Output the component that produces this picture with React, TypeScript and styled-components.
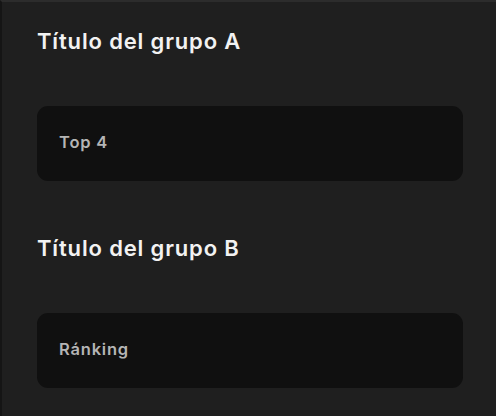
import React from "react";
import styled, { createGlobalStyle } from "styled-components";

const Global = createGlobalStyle`
  html, body { margin: 0; padding: 0; background: #161616; }
  body { width: 496px; height: 416px; overflow: hidden; }
`;

const Frame = styled.div`
  width: 496px;
  height: 416px;
  box-sizing: border-box;
  border-top: 2px solid #2c2c2c;
  border-left: 2px solid #151515;
  background: #1f1f1f;
  padding: 27px 33px 0 35px;
  display: flex;
  flex-direction: column;
  gap: 55px;
  font-family: Inter, "Noto Sans", sans-serif;
`;

const Group = styled.section`
  display: flex;
  flex-direction: column;
  gap: 53px;
`;

const Title = styled.h2`
  margin: 0;
  font-size: 22px;
  line-height: 24px;
  font-weight: 600;
  letter-spacing: 0.85px;
  color: #f2f2f2;
`;

const Card = styled.div`
  height: 75px;
  box-sizing: border-box;
  border-radius: 11px;
  background: #101010;
  display: flex;
  align-items: center;
  padding: 0 0 3px 22px;
  font-size: 16.5px;
  font-weight: 600;
  letter-spacing: 0.8px;
  color: #b5b5b5;
`;

export default function App() {
  return (
    <>
      <Global />
      <Frame>
        <Group>
          <Title>Título del grupo A</Title>
          <Card>Top 4</Card>
        </Group>
        <Group>
          <Title>Título del grupo B</Title>
          <Card>Ránking</Card>
        </Group>
      </Frame>
    </>
  );
}
